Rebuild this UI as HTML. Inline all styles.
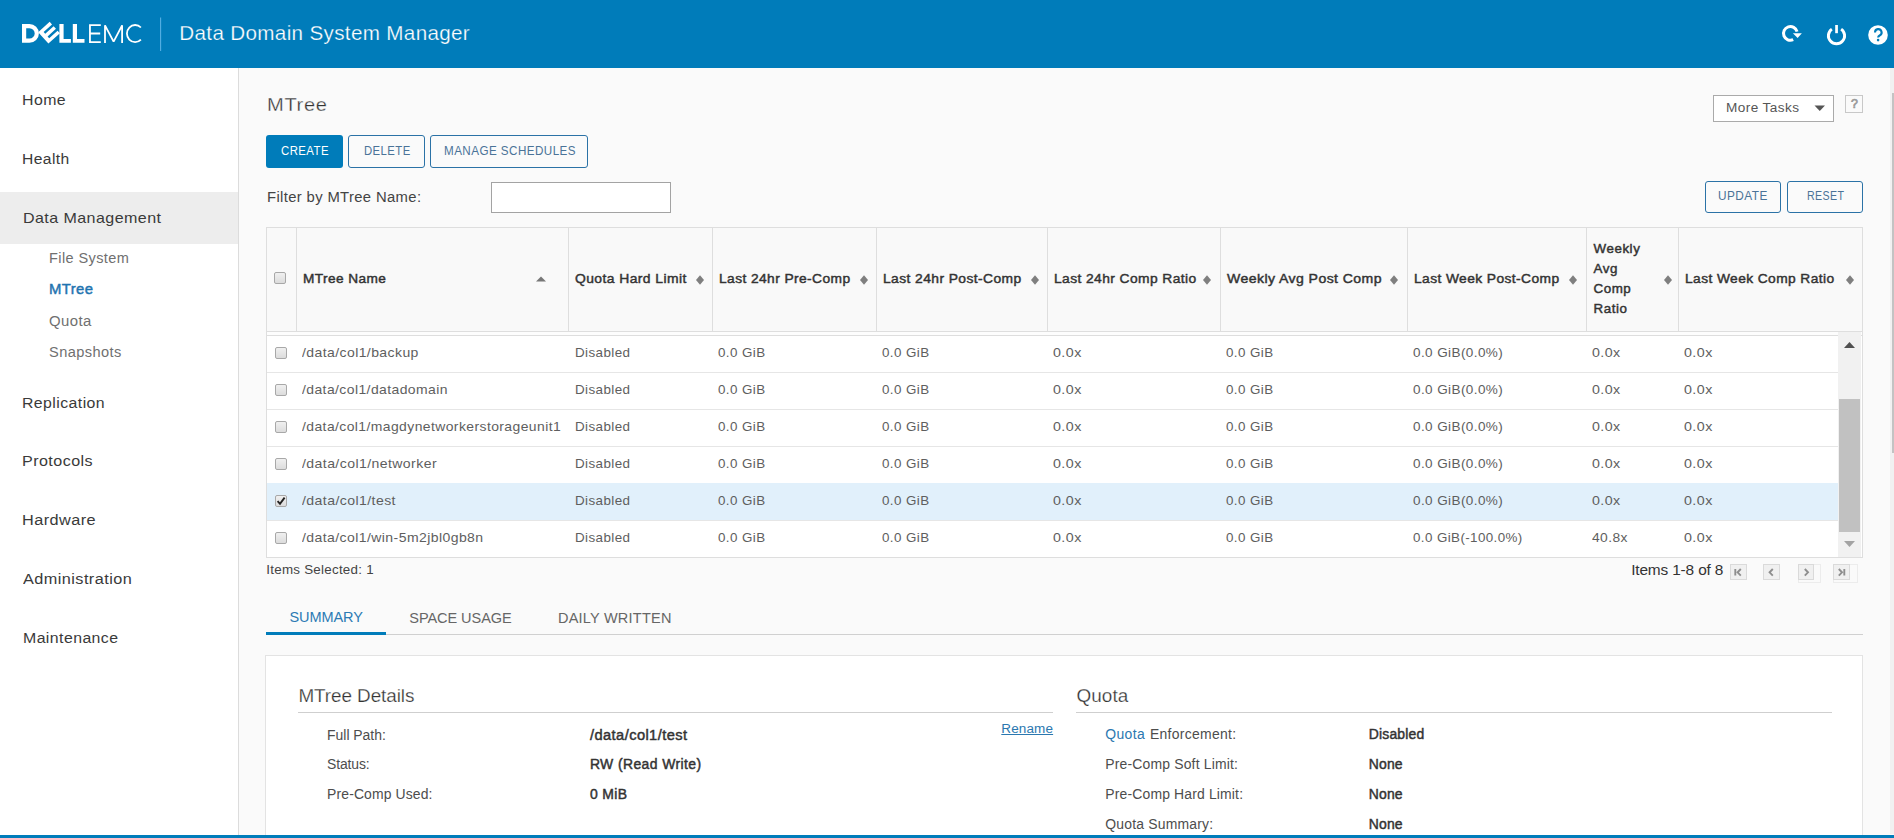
<!DOCTYPE html>
<html><head><meta charset="utf-8"><title>Data Domain System Manager - MTree</title>
<style>
html,body{margin:0;padding:0;width:1894px;height:838px;overflow:hidden;background:#fafafa}
body{position:relative;font-family:"Liberation Sans",sans-serif}
.t{position:absolute;white-space:nowrap}
</style></head><body>
<div style="position:absolute;left:0px;top:0px;width:1894px;height:68px;background:#007cba"></div>
<svg style="position:absolute;left:0;top:0" width="480" height="68" viewBox="0 0 480 68">
<g fill="#fff">
<path d="M22,24 h7.5 a9.4,9.4 0 0 1 0,18.8 h-7.5 z M26.2,28.2 v10.4 h3.3 a5.2,5.2 0 0 0 0,-10.4 z" fill-rule="evenodd"/>
<g transform="translate(48.4,43.6) rotate(-42)">
<path d="M0,0 h15.5 v-3.5 h-11.3 v-2.4 h11.3 v-3.5 h-11.3 v-2.4 h11.3 v-3.5 h-15.5 z"/>
</g>
<path d="M59.4,24 h4.2 v15 h7.3 v3.8 h-11.5 z"/>
<path d="M72.8,24 h4.2 v15 h7.5 v3.8 h-11.7 z"/>
</g>
<g fill="none" stroke="#fff" stroke-width="1.8">
<path d="M100.8,25.1 H89.95 V42.1 H100.8 M89.95,33.5 H100.2"/>
<path d="M105,43 V25.3 L113.6,41.6 L122.1,25.3 V43" stroke-linejoin="bevel"/>
<path d="M140.9,27.5 A8.2,8.6 0 1 0 140.9,39.7"/>
</g>
<line x1="160.6" y1="17.5" x2="160.6" y2="51" stroke="#55b0e3" stroke-width="1.1"/>
</svg>
<div class="t" style="left:179.30px;top:23.00px;font-size:20.64px;line-height:20.64px;letter-spacing:0.338px;font-weight:400;color:#fff;-webkit-text-stroke:0.25px #007cba;">Data Domain System Manager</div>
<svg style="position:absolute;left:1770px;top:14px" width="124" height="40" viewBox="0 0 124 40">
<path d="M23.2,25.7 A6.9,6.9 0 1 1 27.07,17.6" fill="none" stroke="#fff" stroke-width="3"/>
<path d="M22.9,19.2 L31.9,19.2 L27.6,24 z" fill="#fff"/>
<path d="M61.85,15.07 A8.1,8.1 0 1 0 71.15,15.07" fill="none" stroke="#fff" stroke-width="2.9"/>
<rect x="65.2" y="11" width="2.7" height="8.2" fill="#fff"/>
<circle cx="108" cy="21" r="9.8" fill="#fff"/>
<path d="M105,18.4 A3.3,3.3 0 1 1 109.9,21.3 Q108.1,22.2 108.1,23.6" fill="none" stroke="#007cba" stroke-width="2.1"/>
<circle cx="108.1" cy="26.1" r="1.3" fill="#007cba"/>
</svg>
<div style="position:absolute;left:0px;top:68px;width:238px;height:770px;background:#fff"></div>
<div style="position:absolute;left:238px;top:68px;width:1px;height:770px;background:#dcdcdc"></div>
<div style="position:absolute;left:0px;top:192px;width:238px;height:51.5px;background:#ededed"></div>
<div class="t" style="left:22.40px;top:92.98px;font-size:14.83px;line-height:14.83px;letter-spacing:0.400px;font-weight:400;color:#3a3a3a;transform:scaleX(1.0715);transform-origin:0.00px 0;">Home</div>
<div class="t" style="left:22.40px;top:151.98px;font-size:14.83px;line-height:14.83px;letter-spacing:0.400px;font-weight:400;color:#3a3a3a;transform:scaleX(1.0547);transform-origin:0.00px 0;">Health</div>
<div class="t" style="left:22.70px;top:209.98px;font-size:15.12px;line-height:15.12px;letter-spacing:0.400px;font-weight:400;color:#3a3a3a;transform:scaleX(1.0621);transform-origin:0.00px 0;">Data Management</div>
<div class="t" style="left:49.40px;top:251.02px;font-size:14.53px;line-height:14.53px;letter-spacing:0.400px;font-weight:400;color:#707070;transform:scaleX(1.0007);transform-origin:0.00px 0;">File System</div>
<div class="t" style="left:49.40px;top:282.02px;font-size:14.53px;line-height:14.53px;letter-spacing:0.400px;font-weight:400;color:#1f74b0;transform:scaleX(1.0227);transform-origin:0.00px 0;-webkit-text-stroke:0.45px #1f74b0;">MTree</div>
<div class="t" style="left:49.40px;top:314.02px;font-size:14.53px;line-height:14.53px;letter-spacing:0.400px;font-weight:400;color:#707070;transform:scaleX(1.0271);transform-origin:0.00px 0;">Quota</div>
<div class="t" style="left:49.40px;top:345.02px;font-size:14.53px;line-height:14.53px;letter-spacing:0.400px;font-weight:400;color:#707070;transform:scaleX(1.0059);transform-origin:0.00px 0;">Snapshots</div>
<div class="t" style="left:22.40px;top:395.98px;font-size:14.83px;line-height:14.83px;letter-spacing:0.400px;font-weight:400;color:#3a3a3a;transform:scaleX(1.0684);transform-origin:0.00px 0;">Replication</div>
<div class="t" style="left:22.40px;top:453.98px;font-size:14.83px;line-height:14.83px;letter-spacing:0.400px;font-weight:400;color:#3a3a3a;transform:scaleX(1.0858);transform-origin:0.00px 0;">Protocols</div>
<div class="t" style="left:22.40px;top:512.98px;font-size:14.83px;line-height:14.83px;letter-spacing:0.400px;font-weight:400;color:#3a3a3a;transform:scaleX(1.0974);transform-origin:0.00px 0;">Hardware</div>
<div class="t" style="left:22.70px;top:571.98px;font-size:14.83px;line-height:14.83px;letter-spacing:0.400px;font-weight:400;color:#3a3a3a;transform:scaleX(1.0966);transform-origin:0.00px 0;">Administration</div>
<div class="t" style="left:22.70px;top:630.98px;font-size:14.83px;line-height:14.83px;letter-spacing:0.400px;font-weight:400;color:#3a3a3a;transform:scaleX(1.0689);transform-origin:0.00px 0;">Maintenance</div>
<div style="position:absolute;left:239px;top:68px;width:1655px;height:766px;background:#fafafa"></div>
<div style="position:absolute;left:1889.5px;top:68px;width:4.5px;height:766px;background:#f1f1f1"></div>
<div style="position:absolute;left:1891.5px;top:93px;width:2.5px;height:360px;background:#c3c3c3"></div>
<div class="t" style="left:267.00px;top:96.02px;font-size:18.31px;line-height:18.31px;letter-spacing:0.600px;font-weight:400;color:#333;transform:scaleX(1.0990);transform-origin:0.00px 0;-webkit-text-stroke:0.3px #fafafa;">MTree</div>
<div style="position:absolute;left:266px;top:135px;width:77px;height:33px;background:#007cba;border-radius:3px"></div>
<div class="t" style="left:280.90px;top:144.00px;font-size:13.08px;line-height:13.08px;letter-spacing:0.500px;font-weight:400;color:#fff;transform:scaleX(0.8705);transform-origin:0.00px 0;">CREATE</div>
<div style="position:absolute;left:348px;top:135px;width:77px;height:33px;border:1px solid #2b72a6;border-radius:3px;box-sizing:border-box"></div>
<div class="t" style="left:363.70px;top:144.00px;font-size:13.08px;line-height:13.08px;letter-spacing:0.500px;font-weight:400;color:#4a7398;transform:scaleX(0.8654);transform-origin:0.00px 0;">DELETE</div>
<div style="position:absolute;left:430px;top:135px;width:158px;height:33px;border:1px solid #2b72a6;border-radius:3px;box-sizing:border-box"></div>
<div class="t" style="left:443.50px;top:144.00px;font-size:13.08px;line-height:13.08px;letter-spacing:0.500px;font-weight:400;color:#4a7398;transform:scaleX(0.8904);transform-origin:0.00px 0;">MANAGE SCHEDULES</div>
<div class="t" style="left:267.00px;top:189.98px;font-size:14.83px;line-height:14.83px;letter-spacing:0.354px;font-weight:400;color:#444;">Filter by MTree Name:</div>
<div style="position:absolute;left:491px;top:182px;width:180px;height:31px;background:#fff;border:1px solid #a3a3a3;box-sizing:border-box"></div>
<div style="position:absolute;left:1713px;top:95px;width:121px;height:26.5px;background:#fff;border:1px solid #aaa;box-sizing:border-box"></div>
<div class="t" style="left:1725.60px;top:101.00px;font-size:13.08px;line-height:13.08px;letter-spacing:0.400px;font-weight:400;color:#555;transform:scaleX(1.0392);transform-origin:0.00px 0;">More Tasks</div>
<svg style="position:absolute;left:1814px;top:105px" width="12" height="7"><path d="M0.5,0.5 L11,0.5 L5.75,6 z" fill="#555"/></svg>
<div style="position:absolute;left:1845px;top:95px;width:18px;height:17.5px;border:1px solid #c8c8c8;box-sizing:border-box"></div>
<div class="t" style="left:1851.00px;top:98.02px;font-size:12.35px;line-height:12.35px;letter-spacing:0.000px;font-weight:400;color:#9a9a9a;-webkit-text-stroke:0.7px #9a9a9a;">?</div>
<div style="position:absolute;left:1705px;top:180.5px;width:76px;height:32.0px;border:1px solid #2b72a6;border-radius:3px;box-sizing:border-box"></div>
<div class="t" style="left:1718.40px;top:190.02px;font-size:12.94px;line-height:12.94px;letter-spacing:0.500px;font-weight:400;color:#4a7398;transform:scaleX(0.9132);transform-origin:0.00px 0;">UPDATE</div>
<div style="position:absolute;left:1787px;top:180.5px;width:76px;height:32.0px;border:1px solid #2b72a6;border-radius:3px;box-sizing:border-box"></div>
<div class="t" style="left:1806.70px;top:190.02px;font-size:12.94px;line-height:12.94px;letter-spacing:0.500px;font-weight:400;color:#4a7398;transform:scaleX(0.8219);transform-origin:0.00px 0;">RESET</div>
<div style="position:absolute;left:266px;top:227px;width:1597px;height:105px;background:#f9f9f9;border:1px solid #dedede;border-bottom:1px solid #dedede;box-sizing:border-box"></div>
<div style="position:absolute;left:266px;top:332px;width:1597px;height:226px;background:#fff;border:1px solid #dedede;box-sizing:border-box"></div>
<div style="position:absolute;left:267px;top:332px;width:1595px;height:3px;background:#fdfdfd"></div>
<div style="position:absolute;left:266px;top:335px;width:1597px;height:1px;background:#dedede"></div>
<div style="position:absolute;left:296px;top:228px;width:1px;height:103px;background:#dedede"></div>
<div style="position:absolute;left:568px;top:228px;width:1px;height:103px;background:#dedede"></div>
<div style="position:absolute;left:712px;top:228px;width:1px;height:103px;background:#dedede"></div>
<div style="position:absolute;left:876px;top:228px;width:1px;height:103px;background:#dedede"></div>
<div style="position:absolute;left:1047px;top:228px;width:1px;height:103px;background:#dedede"></div>
<div style="position:absolute;left:1220px;top:228px;width:1px;height:103px;background:#dedede"></div>
<div style="position:absolute;left:1407px;top:228px;width:1px;height:103px;background:#dedede"></div>
<div style="position:absolute;left:1586px;top:228px;width:1px;height:103px;background:#dedede"></div>
<div style="position:absolute;left:1678px;top:228px;width:1px;height:103px;background:#dedede"></div>
<div style="position:absolute;left:274px;top:272px;width:12px;height:12px;border:1px solid #a8a8a8;border-radius:2px;box-sizing:border-box;background:linear-gradient(#f0f0f0,#dcdcdc)"></div>
<div class="t" style="left:303.40px;top:272.01px;font-size:13.37px;line-height:13.37px;letter-spacing:0.400px;font-weight:400;color:#333;transform:scaleX(1.0227);transform-origin:0.00px 0;-webkit-text-stroke:0.45px #333;">MTree Name</div>
<svg style="position:absolute;left:535px;top:276px" width="12" height="6"><path d="M1,5.5 L11,5.5 L6,0.5 z" fill="#777"/></svg>
<div class="t" style="left:575.30px;top:272.01px;font-size:13.37px;line-height:13.37px;letter-spacing:0.400px;font-weight:400;color:#333;transform:scaleX(1.0402);transform-origin:0.00px 0;-webkit-text-stroke:0.45px #333;">Quota Hard Limit</div>
<svg style="position:absolute;left:694.50px;top:273.80px" width="10" height="12"><path d="M5,1.25 L9,6 L5,10.75 L1,6 z" fill="#7f7f7f"/></svg>
<div class="t" style="left:719.20px;top:272.01px;font-size:13.37px;line-height:13.37px;letter-spacing:0.400px;font-weight:400;color:#333;transform:scaleX(1.0313);transform-origin:0.00px 0;-webkit-text-stroke:0.45px #333;">Last 24hr Pre-Comp</div>
<svg style="position:absolute;left:858.50px;top:273.80px" width="10" height="12"><path d="M5,1.25 L9,6 L5,10.75 L1,6 z" fill="#7f7f7f"/></svg>
<div class="t" style="left:882.90px;top:272.01px;font-size:13.37px;line-height:13.37px;letter-spacing:0.400px;font-weight:400;color:#333;transform:scaleX(1.0354);transform-origin:0.00px 0;-webkit-text-stroke:0.45px #333;">Last 24hr Post-Comp</div>
<svg style="position:absolute;left:1029.50px;top:273.80px" width="10" height="12"><path d="M5,1.25 L9,6 L5,10.75 L1,6 z" fill="#7f7f7f"/></svg>
<div class="t" style="left:1054.00px;top:272.01px;font-size:13.37px;line-height:13.37px;letter-spacing:0.400px;font-weight:400;color:#333;transform:scaleX(1.0338);transform-origin:0.00px 0;-webkit-text-stroke:0.45px #333;">Last 24hr Comp Ratio</div>
<svg style="position:absolute;left:1202.30px;top:273.80px" width="10" height="12"><path d="M5,1.25 L9,6 L5,10.75 L1,6 z" fill="#7f7f7f"/></svg>
<div class="t" style="left:1227.40px;top:272.01px;font-size:13.37px;line-height:13.37px;letter-spacing:0.400px;font-weight:400;color:#333;transform:scaleX(1.0538);transform-origin:0.00px 0;-webkit-text-stroke:0.45px #333;">Weekly Avg Post Comp</div>
<svg style="position:absolute;left:1389.30px;top:273.80px" width="10" height="12"><path d="M5,1.25 L9,6 L5,10.75 L1,6 z" fill="#7f7f7f"/></svg>
<div class="t" style="left:1414.10px;top:272.01px;font-size:13.37px;line-height:13.37px;letter-spacing:0.400px;font-weight:400;color:#333;transform:scaleX(1.0318);transform-origin:0.00px 0;-webkit-text-stroke:0.45px #333;">Last Week Post-Comp</div>
<svg style="position:absolute;left:1568.20px;top:273.80px" width="10" height="12"><path d="M5,1.25 L9,6 L5,10.75 L1,6 z" fill="#7f7f7f"/></svg>
<div class="t" style="left:1684.90px;top:272.01px;font-size:13.37px;line-height:13.37px;letter-spacing:0.400px;font-weight:400;color:#333;transform:scaleX(1.0306);transform-origin:0.00px 0;-webkit-text-stroke:0.45px #333;">Last Week Comp Ratio</div>
<svg style="position:absolute;left:1845.40px;top:273.80px" width="10" height="12"><path d="M5,1.25 L9,6 L5,10.75 L1,6 z" fill="#7f7f7f"/></svg>
<div class="t" style="left:1593.50px;top:242.01px;font-size:13.37px;line-height:13.37px;letter-spacing:0.550px;font-weight:400;color:#333;-webkit-text-stroke:0.45px #333;">Weekly</div>
<div class="t" style="left:1593.50px;top:262.01px;font-size:13.37px;line-height:13.37px;letter-spacing:0.550px;font-weight:400;color:#333;-webkit-text-stroke:0.45px #333;">Avg</div>
<div class="t" style="left:1593.50px;top:282.01px;font-size:13.37px;line-height:13.37px;letter-spacing:0.550px;font-weight:400;color:#333;-webkit-text-stroke:0.45px #333;">Comp</div>
<div class="t" style="left:1593.50px;top:302.01px;font-size:13.37px;line-height:13.37px;letter-spacing:0.550px;font-weight:400;color:#333;-webkit-text-stroke:0.45px #333;">Ratio</div>
<svg style="position:absolute;left:1662.50px;top:273.80px" width="10" height="12"><path d="M5,1.25 L9,6 L5,10.75 L1,6 z" fill="#7f7f7f"/></svg>
<div style="position:absolute;left:267px;top:372px;width:1571px;height:1px;background:#e6e6e6"></div>
<div style="position:absolute;left:275px;top:347px;width:12px;height:12px;border:1px solid #a8a8a8;border-radius:2px;box-sizing:border-box;background:linear-gradient(#f0f0f0,#dcdcdc)"></div>
<div class="t" style="left:302.30px;top:346.01px;font-size:13.37px;line-height:13.37px;letter-spacing:0.400px;font-weight:400;color:#5e5e5e;transform:scaleX(1.0473);transform-origin:0.00px 0;">/data/col1/backup</div>
<div class="t" style="left:574.50px;top:346.01px;font-size:13.37px;line-height:13.37px;letter-spacing:0.400px;font-weight:400;color:#5e5e5e;transform:scaleX(1.0033);transform-origin:0.00px 0;">Disabled</div>
<div class="t" style="left:718.40px;top:346.01px;font-size:13.37px;line-height:13.37px;letter-spacing:0.400px;font-weight:400;color:#5e5e5e;transform:scaleX(1.0022);transform-origin:0.00px 0;">0.0 GiB</div>
<div class="t" style="left:882.00px;top:346.01px;font-size:13.37px;line-height:13.37px;letter-spacing:0.400px;font-weight:400;color:#5e5e5e;transform:scaleX(1.0022);transform-origin:0.00px 0;">0.0 GiB</div>
<div class="t" style="left:1053.20px;top:346.01px;font-size:13.37px;line-height:13.37px;letter-spacing:0.400px;font-weight:400;color:#5e5e5e;transform:scaleX(1.0690);transform-origin:0.00px 0;">0.0x</div>
<div class="t" style="left:1226.40px;top:346.01px;font-size:13.37px;line-height:13.37px;letter-spacing:0.400px;font-weight:400;color:#5e5e5e;transform:scaleX(1.0022);transform-origin:0.00px 0;">0.0 GiB</div>
<div class="t" style="left:1413.30px;top:346.01px;font-size:13.37px;line-height:13.37px;letter-spacing:0.400px;font-weight:400;color:#5e5e5e;transform:scaleX(1.0115);transform-origin:0.00px 0;">0.0 GiB(0.0%)</div>
<div class="t" style="left:1592.00px;top:346.01px;font-size:13.37px;line-height:13.37px;letter-spacing:0.400px;font-weight:400;color:#5e5e5e;transform:scaleX(1.0652);transform-origin:0.00px 0;">0.0x</div>
<div class="t" style="left:1683.70px;top:346.01px;font-size:13.37px;line-height:13.37px;letter-spacing:0.400px;font-weight:400;color:#5e5e5e;transform:scaleX(1.0690);transform-origin:0.00px 0;">0.0x</div>
<div style="position:absolute;left:267px;top:409px;width:1571px;height:1px;background:#e6e6e6"></div>
<div style="position:absolute;left:275px;top:384px;width:12px;height:12px;border:1px solid #a8a8a8;border-radius:2px;box-sizing:border-box;background:linear-gradient(#f0f0f0,#dcdcdc)"></div>
<div class="t" style="left:302.30px;top:383.01px;font-size:13.37px;line-height:13.37px;letter-spacing:0.400px;font-weight:400;color:#5e5e5e;transform:scaleX(1.0431);transform-origin:0.00px 0;">/data/col1/datadomain</div>
<div class="t" style="left:574.50px;top:383.01px;font-size:13.37px;line-height:13.37px;letter-spacing:0.400px;font-weight:400;color:#5e5e5e;transform:scaleX(1.0033);transform-origin:0.00px 0;">Disabled</div>
<div class="t" style="left:718.40px;top:383.01px;font-size:13.37px;line-height:13.37px;letter-spacing:0.400px;font-weight:400;color:#5e5e5e;transform:scaleX(1.0022);transform-origin:0.00px 0;">0.0 GiB</div>
<div class="t" style="left:882.00px;top:383.01px;font-size:13.37px;line-height:13.37px;letter-spacing:0.400px;font-weight:400;color:#5e5e5e;transform:scaleX(1.0022);transform-origin:0.00px 0;">0.0 GiB</div>
<div class="t" style="left:1053.20px;top:383.01px;font-size:13.37px;line-height:13.37px;letter-spacing:0.400px;font-weight:400;color:#5e5e5e;transform:scaleX(1.0690);transform-origin:0.00px 0;">0.0x</div>
<div class="t" style="left:1226.40px;top:383.01px;font-size:13.37px;line-height:13.37px;letter-spacing:0.400px;font-weight:400;color:#5e5e5e;transform:scaleX(1.0022);transform-origin:0.00px 0;">0.0 GiB</div>
<div class="t" style="left:1413.30px;top:383.01px;font-size:13.37px;line-height:13.37px;letter-spacing:0.400px;font-weight:400;color:#5e5e5e;transform:scaleX(1.0115);transform-origin:0.00px 0;">0.0 GiB(0.0%)</div>
<div class="t" style="left:1592.00px;top:383.01px;font-size:13.37px;line-height:13.37px;letter-spacing:0.400px;font-weight:400;color:#5e5e5e;transform:scaleX(1.0652);transform-origin:0.00px 0;">0.0x</div>
<div class="t" style="left:1683.70px;top:383.01px;font-size:13.37px;line-height:13.37px;letter-spacing:0.400px;font-weight:400;color:#5e5e5e;transform:scaleX(1.0690);transform-origin:0.00px 0;">0.0x</div>
<div style="position:absolute;left:267px;top:446px;width:1571px;height:1px;background:#e6e6e6"></div>
<div style="position:absolute;left:275px;top:421px;width:12px;height:12px;border:1px solid #a8a8a8;border-radius:2px;box-sizing:border-box;background:linear-gradient(#f0f0f0,#dcdcdc)"></div>
<div class="t" style="left:302.30px;top:420.01px;font-size:13.37px;line-height:13.37px;letter-spacing:0.400px;font-weight:400;color:#5e5e5e;transform:scaleX(1.0417);transform-origin:0.00px 0;">/data/col1/magdynetworkerstorageunit1</div>
<div class="t" style="left:574.50px;top:420.01px;font-size:13.37px;line-height:13.37px;letter-spacing:0.400px;font-weight:400;color:#5e5e5e;transform:scaleX(1.0033);transform-origin:0.00px 0;">Disabled</div>
<div class="t" style="left:718.40px;top:420.01px;font-size:13.37px;line-height:13.37px;letter-spacing:0.400px;font-weight:400;color:#5e5e5e;transform:scaleX(1.0022);transform-origin:0.00px 0;">0.0 GiB</div>
<div class="t" style="left:882.00px;top:420.01px;font-size:13.37px;line-height:13.37px;letter-spacing:0.400px;font-weight:400;color:#5e5e5e;transform:scaleX(1.0022);transform-origin:0.00px 0;">0.0 GiB</div>
<div class="t" style="left:1053.20px;top:420.01px;font-size:13.37px;line-height:13.37px;letter-spacing:0.400px;font-weight:400;color:#5e5e5e;transform:scaleX(1.0690);transform-origin:0.00px 0;">0.0x</div>
<div class="t" style="left:1226.40px;top:420.01px;font-size:13.37px;line-height:13.37px;letter-spacing:0.400px;font-weight:400;color:#5e5e5e;transform:scaleX(1.0022);transform-origin:0.00px 0;">0.0 GiB</div>
<div class="t" style="left:1413.30px;top:420.01px;font-size:13.37px;line-height:13.37px;letter-spacing:0.400px;font-weight:400;color:#5e5e5e;transform:scaleX(1.0115);transform-origin:0.00px 0;">0.0 GiB(0.0%)</div>
<div class="t" style="left:1592.00px;top:420.01px;font-size:13.37px;line-height:13.37px;letter-spacing:0.400px;font-weight:400;color:#5e5e5e;transform:scaleX(1.0652);transform-origin:0.00px 0;">0.0x</div>
<div class="t" style="left:1683.70px;top:420.01px;font-size:13.37px;line-height:13.37px;letter-spacing:0.400px;font-weight:400;color:#5e5e5e;transform:scaleX(1.0690);transform-origin:0.00px 0;">0.0x</div>
<div style="position:absolute;left:267px;top:483px;width:1571px;height:1px;background:#e6e6e6"></div>
<div style="position:absolute;left:275px;top:458px;width:12px;height:12px;border:1px solid #a8a8a8;border-radius:2px;box-sizing:border-box;background:linear-gradient(#f0f0f0,#dcdcdc)"></div>
<div class="t" style="left:302.30px;top:457.01px;font-size:13.37px;line-height:13.37px;letter-spacing:0.400px;font-weight:400;color:#5e5e5e;transform:scaleX(1.0522);transform-origin:0.00px 0;">/data/col1/networker</div>
<div class="t" style="left:574.50px;top:457.01px;font-size:13.37px;line-height:13.37px;letter-spacing:0.400px;font-weight:400;color:#5e5e5e;transform:scaleX(1.0033);transform-origin:0.00px 0;">Disabled</div>
<div class="t" style="left:718.40px;top:457.01px;font-size:13.37px;line-height:13.37px;letter-spacing:0.400px;font-weight:400;color:#5e5e5e;transform:scaleX(1.0022);transform-origin:0.00px 0;">0.0 GiB</div>
<div class="t" style="left:882.00px;top:457.01px;font-size:13.37px;line-height:13.37px;letter-spacing:0.400px;font-weight:400;color:#5e5e5e;transform:scaleX(1.0022);transform-origin:0.00px 0;">0.0 GiB</div>
<div class="t" style="left:1053.20px;top:457.01px;font-size:13.37px;line-height:13.37px;letter-spacing:0.400px;font-weight:400;color:#5e5e5e;transform:scaleX(1.0690);transform-origin:0.00px 0;">0.0x</div>
<div class="t" style="left:1226.40px;top:457.01px;font-size:13.37px;line-height:13.37px;letter-spacing:0.400px;font-weight:400;color:#5e5e5e;transform:scaleX(1.0022);transform-origin:0.00px 0;">0.0 GiB</div>
<div class="t" style="left:1413.30px;top:457.01px;font-size:13.37px;line-height:13.37px;letter-spacing:0.400px;font-weight:400;color:#5e5e5e;transform:scaleX(1.0115);transform-origin:0.00px 0;">0.0 GiB(0.0%)</div>
<div class="t" style="left:1592.00px;top:457.01px;font-size:13.37px;line-height:13.37px;letter-spacing:0.400px;font-weight:400;color:#5e5e5e;transform:scaleX(1.0652);transform-origin:0.00px 0;">0.0x</div>
<div class="t" style="left:1683.70px;top:457.01px;font-size:13.37px;line-height:13.37px;letter-spacing:0.400px;font-weight:400;color:#5e5e5e;transform:scaleX(1.0690);transform-origin:0.00px 0;">0.0x</div>
<div style="position:absolute;left:267px;top:483px;width:1571px;height:37px;background:#e1f0fb"></div>
<div style="position:absolute;left:267px;top:520px;width:1571px;height:1px;background:#e6e6e6"></div>
<div style="position:absolute;left:275px;top:495px;width:12px;height:12px;border:1px solid #a8a8a8;border-radius:2px;box-sizing:border-box;background:linear-gradient(#f0f0f0,#dcdcdc)"></div>
<svg style="position:absolute;left:275px;top:495px" width="12" height="12"><path d="M2.6,6.2 L5,8.8 L9.6,2.6" fill="none" stroke="#222" stroke-width="1.9"/></svg>
<div class="t" style="left:302.30px;top:494.01px;font-size:13.37px;line-height:13.37px;letter-spacing:0.400px;font-weight:400;color:#5e5e5e;transform:scaleX(1.0536);transform-origin:0.00px 0;">/data/col1/test</div>
<div class="t" style="left:574.50px;top:494.01px;font-size:13.37px;line-height:13.37px;letter-spacing:0.400px;font-weight:400;color:#5e5e5e;transform:scaleX(1.0033);transform-origin:0.00px 0;">Disabled</div>
<div class="t" style="left:718.40px;top:494.01px;font-size:13.37px;line-height:13.37px;letter-spacing:0.400px;font-weight:400;color:#5e5e5e;transform:scaleX(1.0022);transform-origin:0.00px 0;">0.0 GiB</div>
<div class="t" style="left:882.00px;top:494.01px;font-size:13.37px;line-height:13.37px;letter-spacing:0.400px;font-weight:400;color:#5e5e5e;transform:scaleX(1.0022);transform-origin:0.00px 0;">0.0 GiB</div>
<div class="t" style="left:1053.20px;top:494.01px;font-size:13.37px;line-height:13.37px;letter-spacing:0.400px;font-weight:400;color:#5e5e5e;transform:scaleX(1.0690);transform-origin:0.00px 0;">0.0x</div>
<div class="t" style="left:1226.40px;top:494.01px;font-size:13.37px;line-height:13.37px;letter-spacing:0.400px;font-weight:400;color:#5e5e5e;transform:scaleX(1.0022);transform-origin:0.00px 0;">0.0 GiB</div>
<div class="t" style="left:1413.30px;top:494.01px;font-size:13.37px;line-height:13.37px;letter-spacing:0.400px;font-weight:400;color:#5e5e5e;transform:scaleX(1.0115);transform-origin:0.00px 0;">0.0 GiB(0.0%)</div>
<div class="t" style="left:1592.00px;top:494.01px;font-size:13.37px;line-height:13.37px;letter-spacing:0.400px;font-weight:400;color:#5e5e5e;transform:scaleX(1.0652);transform-origin:0.00px 0;">0.0x</div>
<div class="t" style="left:1683.70px;top:494.01px;font-size:13.37px;line-height:13.37px;letter-spacing:0.400px;font-weight:400;color:#5e5e5e;transform:scaleX(1.0690);transform-origin:0.00px 0;">0.0x</div>
<div style="position:absolute;left:275px;top:532px;width:12px;height:12px;border:1px solid #a8a8a8;border-radius:2px;box-sizing:border-box;background:linear-gradient(#f0f0f0,#dcdcdc)"></div>
<div class="t" style="left:302.30px;top:531.01px;font-size:13.37px;line-height:13.37px;letter-spacing:0.400px;font-weight:400;color:#5e5e5e;transform:scaleX(1.0492);transform-origin:0.00px 0;">/data/col1/win-5m2jbl0gb8n</div>
<div class="t" style="left:574.50px;top:531.01px;font-size:13.37px;line-height:13.37px;letter-spacing:0.400px;font-weight:400;color:#5e5e5e;transform:scaleX(1.0033);transform-origin:0.00px 0;">Disabled</div>
<div class="t" style="left:718.40px;top:531.01px;font-size:13.37px;line-height:13.37px;letter-spacing:0.400px;font-weight:400;color:#5e5e5e;transform:scaleX(1.0022);transform-origin:0.00px 0;">0.0 GiB</div>
<div class="t" style="left:882.00px;top:531.01px;font-size:13.37px;line-height:13.37px;letter-spacing:0.400px;font-weight:400;color:#5e5e5e;transform:scaleX(1.0022);transform-origin:0.00px 0;">0.0 GiB</div>
<div class="t" style="left:1053.20px;top:531.01px;font-size:13.37px;line-height:13.37px;letter-spacing:0.400px;font-weight:400;color:#5e5e5e;transform:scaleX(1.0690);transform-origin:0.00px 0;">0.0x</div>
<div class="t" style="left:1226.40px;top:531.01px;font-size:13.37px;line-height:13.37px;letter-spacing:0.400px;font-weight:400;color:#5e5e5e;transform:scaleX(1.0022);transform-origin:0.00px 0;">0.0 GiB</div>
<div class="t" style="left:1413.30px;top:531.01px;font-size:13.37px;line-height:13.37px;letter-spacing:0.400px;font-weight:400;color:#5e5e5e;transform:scaleX(1.0009);transform-origin:0.00px 0;">0.0 GiB(-100.0%)</div>
<div class="t" style="left:1592.00px;top:531.01px;font-size:13.37px;line-height:13.37px;letter-spacing:0.400px;font-weight:400;color:#5e5e5e;transform:scaleX(1.0351);transform-origin:0.00px 0;">40.8x</div>
<div class="t" style="left:1683.70px;top:531.01px;font-size:13.37px;line-height:13.37px;letter-spacing:0.400px;font-weight:400;color:#5e5e5e;transform:scaleX(1.0690);transform-origin:0.00px 0;">0.0x</div>
<div style="position:absolute;left:1838px;top:332px;width:23px;height:225px;background:#f1f1f1"></div>
<div style="position:absolute;left:1839px;top:399px;width:21px;height:133px;background:#c1c1c1"></div>
<svg style="position:absolute;left:1843px;top:341px" width="14" height="8"><path d="M1,7 L12,7 L6.5,1 z" fill="#505050"/></svg>
<svg style="position:absolute;left:1843px;top:540px" width="14" height="8"><path d="M1,1 L12,1 L6.5,7 z" fill="#a3a3a3"/></svg>
<div class="t" style="left:266.30px;top:563.01px;font-size:13.37px;line-height:13.37px;letter-spacing:0.256px;font-weight:400;color:#444;">Items Selected: 1</div>
<div class="t" style="left:1631.20px;top:561.98px;font-size:15.41px;line-height:15.41px;letter-spacing:-0.155px;font-weight:400;color:#333;">Items 1-8 of 8</div>
<div style="position:absolute;left:1797.5px;top:563.5px;width:23.5px;height:19.5px;border:1px solid #ececec;box-sizing:border-box"></div>
<div style="position:absolute;left:1833px;top:563.5px;width:24.59999999999991px;height:19.5px;border:1px solid #ececec;box-sizing:border-box"></div>
<div style="position:absolute;left:1730px;top:563.5px;width:16.5px;height:16px;border:1px solid #dadada;background:#f0f0f0;box-sizing:border-box"></div>
<svg style="position:absolute;left:1730px;top:563.5px" width="17" height="16"><path d="M5.3,5 v6.6 M10.8,5 L7.6,8.3 L10.8,11.6" fill="none" stroke="#8e8e8e" stroke-width="1.9"/></svg>
<div style="position:absolute;left:1763px;top:563.5px;width:16.5px;height:16px;border:1px solid #dadada;background:#f0f0f0;box-sizing:border-box"></div>
<svg style="position:absolute;left:1763px;top:563.5px" width="17" height="16"><path d="M9.8,5 L6.6,8.3 L9.8,11.6" fill="none" stroke="#8e8e8e" stroke-width="1.9"/></svg>
<div style="position:absolute;left:1797.5px;top:563.5px;width:16.5px;height:16px;border:1px solid #dadada;background:#f0f0f0;box-sizing:border-box"></div>
<svg style="position:absolute;left:1797.5px;top:563.5px" width="17" height="16"><path d="M6.8,5 L10,8.3 L6.8,11.6" fill="none" stroke="#8e8e8e" stroke-width="1.9"/></svg>
<div style="position:absolute;left:1833px;top:563.5px;width:16.5px;height:16px;border:1px solid #dadada;background:#f0f0f0;box-sizing:border-box"></div>
<svg style="position:absolute;left:1833px;top:563.5px" width="17" height="16"><path d="M11.3,5 v6.6 M5.8,5 L9,8.3 L5.8,11.6" fill="none" stroke="#8e8e8e" stroke-width="1.9"/></svg>
<div style="position:absolute;left:266px;top:633.5px;width:1597px;height:1.0px;background:#d0d0d0"></div>
<div style="position:absolute;left:266px;top:632.3px;width:120px;height:2.7000000000000455px;background:#007cba"></div>
<div class="t" style="left:289.50px;top:610.02px;font-size:14.53px;line-height:14.53px;letter-spacing:-0.093px;font-weight:400;color:#2c7bb4;">SUMMARY</div>
<div class="t" style="left:409.30px;top:611.02px;font-size:14.53px;line-height:14.53px;letter-spacing:-0.062px;font-weight:400;color:#666;">SPACE USAGE</div>
<div class="t" style="left:558.00px;top:611.02px;font-size:14.53px;line-height:14.53px;letter-spacing:0.217px;font-weight:400;color:#666;">DAILY WRITTEN</div>
<div style="position:absolute;left:265px;top:654.5px;width:1598px;height:195.5px;background:#fff;border:1px solid #e3e3e3;box-sizing:border-box"></div>
<div class="t" style="left:298.40px;top:686.98px;font-size:18.90px;line-height:18.90px;letter-spacing:-0.072px;font-weight:400;color:#333;-webkit-text-stroke:0.25px #fff;">MTree Details</div>
<div style="position:absolute;left:298px;top:712px;width:755px;height:1px;background:#cfcfcf"></div>
<div class="t" style="left:1001.30px;top:721.98px;font-size:13.52px;line-height:13.52px;letter-spacing:0.121px;font-weight:400;color:#2b78b0;text-decoration:underline;">Rename</div>
<div class="t" style="left:327.10px;top:729.01px;font-size:13.95px;line-height:13.95px;letter-spacing:-0.017px;font-weight:400;color:#4d4d4d;">Full Path:</div>
<div class="t" style="left:327.10px;top:758.01px;font-size:13.95px;line-height:13.95px;letter-spacing:-0.144px;font-weight:400;color:#4d4d4d;">Status:</div>
<div class="t" style="left:327.10px;top:788.01px;font-size:13.95px;line-height:13.95px;letter-spacing:0.117px;font-weight:400;color:#4d4d4d;">Pre-Comp Used:</div>
<div class="t" style="left:589.90px;top:729.01px;font-size:13.95px;line-height:13.95px;letter-spacing:0.400px;font-weight:400;color:#333;transform:scaleX(1.0502);transform-origin:0.00px 0;-webkit-text-stroke:0.45px #333;">/data/col1/test</div>
<div class="t" style="left:589.90px;top:758.01px;font-size:13.95px;line-height:13.95px;letter-spacing:0.400px;font-weight:400;color:#333;transform:scaleX(1.0000);transform-origin:0.00px 0;-webkit-text-stroke:0.45px #333;">RW (Read Write)</div>
<div class="t" style="left:589.90px;top:788.01px;font-size:13.95px;line-height:13.95px;letter-spacing:0.362px;font-weight:400;color:#333;-webkit-text-stroke:0.45px #333;">0 MiB</div>
<div class="t" style="left:1076.60px;top:686.98px;font-size:18.90px;line-height:18.90px;letter-spacing:0.029px;font-weight:400;color:#333;-webkit-text-stroke:0.25px #fff;">Quota</div>
<div style="position:absolute;left:1076px;top:712px;width:756px;height:1px;background:#cfcfcf"></div>
<div class="t" style="left:1105.30px;top:728.01px;font-size:13.95px;line-height:13.95px;letter-spacing:0.352px;font-weight:400;color:#2b78b0;">Quota</div>
<div class="t" style="left:1149.90px;top:728.01px;font-size:13.95px;line-height:13.95px;letter-spacing:0.304px;font-weight:400;color:#4d4d4d;">Enforcement:</div>
<div class="t" style="left:1105.30px;top:758.01px;font-size:13.95px;line-height:13.95px;letter-spacing:0.169px;font-weight:400;color:#4d4d4d;">Pre-Comp Soft Limit:</div>
<div class="t" style="left:1105.30px;top:788.01px;font-size:13.95px;line-height:13.95px;letter-spacing:0.156px;font-weight:400;color:#4d4d4d;">Pre-Comp Hard Limit:</div>
<div class="t" style="left:1105.30px;top:818.01px;font-size:13.95px;line-height:13.95px;letter-spacing:0.193px;font-weight:400;color:#4d4d4d;">Quota Summary:</div>
<div class="t" style="left:1368.80px;top:728.01px;font-size:13.95px;line-height:13.95px;letter-spacing:0.174px;font-weight:400;color:#333;-webkit-text-stroke:0.45px #333;">Disabled</div>
<div class="t" style="left:1368.80px;top:758.01px;font-size:13.95px;line-height:13.95px;letter-spacing:0.150px;font-weight:400;color:#333;-webkit-text-stroke:0.45px #333;">None</div>
<div class="t" style="left:1368.80px;top:788.01px;font-size:13.95px;line-height:13.95px;letter-spacing:0.150px;font-weight:400;color:#333;-webkit-text-stroke:0.45px #333;">None</div>
<div class="t" style="left:1368.80px;top:818.01px;font-size:13.95px;line-height:13.95px;letter-spacing:0.150px;font-weight:400;color:#333;-webkit-text-stroke:0.45px #333;">None</div>
<div style="position:absolute;left:0px;top:834.6px;width:1894px;height:3.3999999999999773px;background:#007cba"></div>
</body></html>
